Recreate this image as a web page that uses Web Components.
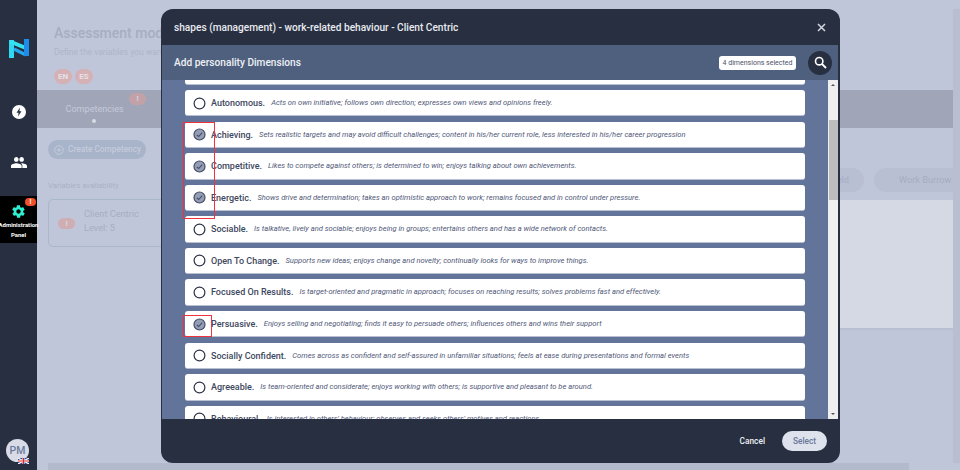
<!DOCTYPE html>
<html><head><meta charset="utf-8"><style>
html,body{margin:0;padding:0;width:960px;height:470px;overflow:hidden;background:#c0c6da;font-family:Roboto,sans-serif}
</style></head><body>
<app-shell></app-shell>
<script>
const def=(n,html)=>customElements.define(n,class extends HTMLElement{connectedCallback(){if(this.shadowRoot)return;const r=this.attachShadow({mode:'open'});r.innerHTML=typeof html==='function'?html(this):html;}});
def('side-bar',`<style>
:host{display:flex;flex-direction:column;width:37px;height:470px;background:#272f40;flex:none;position:relative;align-items:center}
.logo{margin-top:38px;display:block}
.a{margin-top:46px;display:block}
.b{margin-top:38px;display:block}
.admin{margin-top:28px;width:37px;height:47px;background:#000;color:#fff;font:700 6px/9.6px Roboto,sans-serif;text-align:center;position:relative;display:flex;flex-direction:column;align-items:center}
.admin svg{margin-top:8px;margin-bottom:1px}
.admin span{white-space:nowrap}
.bad{position:absolute;right:1px;top:2px;width:11px;height:8px;border-radius:5px;background:#f0502a;font:700 7px/8px Roboto,sans-serif;color:#fff}
.pm{position:absolute;left:6px;top:439px;width:23px;height:23px;border-radius:50%;background:#d9dce6;color:#6b7ba0;font:500 10.500px/23px Roboto,sans-serif;text-align:center}
.flag{position:absolute;left:18px;top:458px}
</style>
<svg class="logo" width="20" height="21" viewBox="0 0 20 21"><path d="M2.500 20V2" stroke="#2fd8f4" stroke-width="5" fill="none"/><path d="M1 3.500L18 10.500" stroke="#35e2f2" stroke-width="4" fill="none"/><path d="M5 11L17 17" stroke="#25a8ec" stroke-width="3.500" fill="none"/><path d="M17.500 1V18" stroke="#1e8ce8" stroke-width="5" fill="none"/></svg>
<svg class="a" width="14" height="14" viewBox="0 0 14 14"><circle cx="7" cy="7" r="7" fill="#fff"/><path d="M8 2.500 L4.500 7.800 H6.600 L6 11.500 L9.500 6.200 H7.400 Z" fill="#272f40"/></svg>
<svg class="b" width="16" height="11" viewBox="0 0 24 16" preserveAspectRatio="none"><path fill="#fff" d="M16 7c1.900 0 3.400-1.500 3.400-3.500S17.900 0 16 0s-3.500 1.600-3.500 3.500S14.100 7 16 7zM8 7c1.900 0 3.400-1.500 3.400-3.500S9.900 0 8 0 4.500 1.600 4.500 3.500 6.100 7 8 7zm0 2c-2.700 0-8 1.300-8 4v3h16v-3c0-2.700-5.300-4-8-4zm8 0c-.3 0-.7 0-1.100.1 1.300.9 2.100 2.200 2.100 3.900v3h7v-3c0-2.700-5.300-4-8-4z"/></svg>
<div class="admin"><svg width="15" height="15" viewBox="0 0 24 24"><path fill="#2ff0d0" d="M19.400 13c0-.3.100-.6.100-1s0-.7-.1-1l2.100-1.600c.2-.2.200-.4.100-.6l-2-3.500c-.1-.2-.4-.3-.6-.2l-2.500 1c-.5-.4-1.100-.7-1.700-1l-.4-2.600c0-.3-.2-.5-.5-.5h-4c-.3 0-.5.200-.5.400l-.4 2.700c-.6.200-1.100.6-1.700 1l-2.500-1c-.2-.1-.5 0-.6.200l-2 3.500c-.1.200-.1.500.1.600L4.600 11c0 .3-.1.600-.1 1s0 .7.100 1l-2.100 1.600c-.2.200-.2.400-.1.600l2 3.500c.1.200.4.300.6.200l2.500-1c.5.400 1.100.7 1.700 1l.4 2.600c0 .2.200.4.500.4h4c.3 0 .5-.2.500-.4l.4-2.600c.6-.3 1.200-.6 1.700-1l2.500 1c.2.100.5 0 .6-.2l2-3.500c.1-.2.100-.5-.1-.6zM12 15.500c-1.900 0-3.500-1.600-3.500-3.500s1.600-3.500 3.500-3.500 3.500 1.600 3.500 3.500-1.600 3.500-3.500 3.500z"/></svg><span>Administration</span><span>Panel</span><div class="bad">!</div></div>
<div class="pm">PM</div>
<svg class="flag" width="11" height="6" viewBox="0 0 11 6"><rect width="11" height="6" fill="#2b3f8a"/><path d="M0 0L11 6M11 0L0 6" stroke="#fff" stroke-width="1.200"/><path d="M5.500 0V6M0 3H11" stroke="#fff" stroke-width="2"/><path d="M5.500 0V6M0 3H11" stroke="#d22" stroke-width="1"/></svg>
`);
def('back-page',`<style>
:host{display:block;flex:1;height:470px;position:relative;color:#a9b0c6;overflow:hidden}
.h{padding:25px 0 0 17px;font:500 14px/17px Roboto,sans-serif;color:#a6adc2;white-space:nowrap}
.s{padding:5px 0 0 17px;font:400 8.500px/10px Roboto,sans-serif;color:#adb4ca;white-space:nowrap}
.l{display:flex;gap:3px;padding:12px 0 0 17px}
.l i{width:18px;height:15px;border-radius:8px;background:#d5b0b4;color:#e4e1e6;font:700 8px/15px Roboto,sans-serif;text-align:center}
.tabs{margin-top:6px;height:38px;width:916px;background:#a0a5b8;position:relative;color:#c5cad8;font:400 9.100px/38px Roboto,sans-serif}
.tabs span{position:absolute;left:28.500px;top:0}
.tabs b{position:absolute;left:92px;top:3px;width:17px;height:12px;border-radius:6px;background:#c2a2a8;color:#d8d4dc;font:700 8px/12px Roboto,sans-serif;text-align:center}
.tabs u{position:absolute;left:55px;top:29px;width:4px;height:4px;border-radius:50%;background:#d9dce6}
.bt{margin:12px 0 0 11px;width:98px;height:19px;border-radius:10px;background:#a8b4ca;color:#c4cbdb;font:500 8.300px/19px Roboto,sans-serif;display:flex;align-items:center;gap:4px;box-sizing:border-box;padding-left:6px;white-space:nowrap}
.v{padding:22px 0 0 11px;font:400 7.800px/9px Roboto,sans-serif;color:#aab1c6;white-space:nowrap}
.card{margin:9px 0 0 11px;width:300px;height:48px;box-sizing:border-box;border:1px solid #a9b7ca;border-radius:5px;position:relative;font:400 9.200px/14px Roboto,sans-serif;color:#a6adc2}
.card b{position:absolute;left:9px;top:18px;width:17px;height:11px;border-radius:6px;background:#cfaeb3;color:#dcd8de;font:700 8px/11px Roboto,sans-serif;text-align:center}
.card span{position:absolute;left:35px;white-space:nowrap}
.pill{position:absolute;top:168px;height:24px;border-radius:12px;background:#b9bfd2;font:400 9.200px/24px Roboto,sans-serif;color:#a5acc1;white-space:nowrap;box-sizing:border-box}
.panel{position:absolute;left:700px;top:200px;width:216px;height:128px;background:#d5d9e4;box-shadow:0 2px 2px #b8bed0}
.sv{position:absolute;right:0;top:9px;width:7px;height:454px;background:#b9bfd1}
.sh{position:absolute;left:11px;bottom:0;width:861px;height:7px;background:#b3bacb}
</style>
<div class="h">Assessment model</div><div class="s">Define the variables you want to measure</div>
<div class="l"><i>EN</i><i>ES</i></div>
<div class="tabs"><span>Competencies</span><b>!</b><u></u></div>
<div class="bt"><svg width="10" height="10" viewBox="0 0 10 10"><circle cx="5" cy="5" r="4.300" fill="none" stroke="#c4cbdb"/><path d="M5 2.800V7.200M2.800 5H7.200" stroke="#c4cbdb"/></svg>Create Competency</div>
<div class="v">Variables availability</div>
<div class="card"><b>!</b><span style="top:7px">Client Centric</span><span style="top:21px">Level: 5</span></div>
<div class="pill" style="left:760px;width:67px;padding-right:15px;text-align:right">Field</div>
<div class="pill" style="left:837px;width:102px;padding-left:25px">Work Burrow</div>
<div class="panel"></div>
<div class="sv"></div><div class="sh"></div>
`);
def('dim-row',h=>{
 const on=h.hasAttribute('on');
 const mark=on?`<svg width="13" height="13" viewBox="0 0 13 13"><circle cx="6.500" cy="6.500" r="5.500" fill="#949db6" stroke="#454d64" stroke-width="1.200"/><path d="M3.800 6.800L5.700 8.500L9.200 4.700" fill="none" stroke="#454d64" stroke-width="1.100"/></svg>`:`<svg width="13" height="13" viewBox="0 0 13 13"><circle cx="6.500" cy="6.500" r="5.400" fill="#fff" stroke="#2a3246" stroke-width="1.200"/></svg>`;
 return `<style>
:host{display:flex;align-items:center;height:26.400px;width:620px;flex:none;box-sizing:border-box;background:#fff;border-radius:3px;border-bottom:1px solid #b9c0d2;padding:.7px 0 0 8px;white-space:nowrap;overflow:hidden}
svg{flex:none;margin-right:5px}
b{font:500 9px/12px Roboto,sans-serif;color:#3e4760;margin-right:6px}
i{font:italic 400 7.580px/12px Roboto,sans-serif;color:#4f5878}
</style>${mark}<b><slot name="t"></slot></b><i><slot></slot></i>`;
});
def('select-modal',`<style>
:host{display:flex;flex-direction:column;position:absolute;left:161px;top:9px;width:679px;height:454px;border-radius:12px;overflow:hidden;background:#272f40;box-sizing:border-box}
.top{height:36px;flex:none;display:flex;align-items:center;justify-content:space-between;padding:2px 14px 0 13px;box-sizing:border-box;color:#e9ebf1;font:500 10.150px/14px Roboto,sans-serif}
.top svg{margin-top:-2px}
.sub{height:35px;flex:none;display:flex;align-items:center;background:#4f607e;padding:0 6px 0 12px;color:#eef0f5;font:500 10.150px/14px Roboto,sans-serif;margin:0 2px 0 1px}
.sub span{flex:1}
.chip{height:14px;width:77px;background:#fff;border-radius:3px;color:#4b5269;font:400 7px/14px Roboto,sans-serif;text-align:center;margin-right:12px}
.sr{width:24px;height:24px;border-radius:50%;background:#272f40;display:flex;align-items:center;justify-content:center}
.body{flex:1;display:flex;min-height:0;background:#62749a;margin:0 2px 0 1px;overflow:hidden}
.list{flex:1;display:flex;flex-direction:column;gap:5.200px;padding:0 0 0 23px;margin-top:-21.600px}
.bar{width:10px;flex:none;background:#efefef;position:relative}
.th{position:absolute;left:1px;right:0;top:40px;height:80px;background:#bdbdbd}
.bar:before,.bar:after{content:"";position:absolute;left:3px;border:2.500px solid transparent}
.bar:before{top:4px;border-bottom-color:#555;border-top:0}
.bar:after{bottom:4px;border-top-color:#555;border-bottom:0}
.foot{height:44px;flex:none;display:flex;align-items:center;justify-content:flex-end;padding:0 13px 0 0;gap:17px}
.c{font:500 8.300px/12px Roboto,sans-serif;color:#f0f1f5}
.sel{width:45px;height:20px;border-radius:10px;background:#dde2ec;color:#69779a;font:500 8.300px/20px Roboto,sans-serif;text-align:center}
</style>
<div class="top"><span>shapes (management) - work-related behaviour - Client Centric</span><svg width="9" height="9" viewBox="0 0 9 9"><path d="M1 1L8 8M8 1L1 8" stroke="#d4d8e2" stroke-width="1.500"/></svg></div>
<div class="sub"><span>Add personality Dimensions</span><div class="chip">4 dimensions selected</div><div class="sr"><svg width="13" height="13" viewBox="0 0 13 13"><circle cx="5.200" cy="5.200" r="3.700" fill="none" stroke="#fff" stroke-width="1.600"/><path d="M8 8L12 12" stroke="#fff" stroke-width="1.800"/></svg></div></div>
<div class="body"><div class="list"><slot></slot></div><div class="bar"><div class="th"></div></div></div>
<div class="foot"><span class="c">Cancel</span><div class="sel">Select</div></div>
`);
def('app-shell',`<style>
:host{display:flex;width:960px;height:470px;position:relative;overflow:hidden;background:#c0c6da}
.mk{position:absolute;border:1.200px solid #f0323c;box-sizing:border-box;pointer-events:none}
</style>
<side-bar></side-bar><back-page></back-page>
<select-modal>
<dim-row></dim-row>
<dim-row><span slot="t">Autonomous.</span>Acts on own initiative; follows own direction; expresses own views and opinions freely.</dim-row>
<dim-row on><span slot="t">Achieving.</span>Sets realistic targets and may avoid difficult challenges; content in his/her current role, less interested in his/her career progression</dim-row>
<dim-row on><span slot="t">Competitive.</span>Likes to compete against others; is determined to win; enjoys talking about own achievements.</dim-row>
<dim-row on><span slot="t">Energetic.</span>Shows drive and determination; takes an optimistic approach to work; remains focused and in control under pressure.</dim-row>
<dim-row><span slot="t">Sociable.</span>Is talkative, lively and sociable; enjoys being in groups; entertains others and has a wide network of contacts.</dim-row>
<dim-row><span slot="t">Open To Change.</span>Supports new ideas; enjoys change and novelty; continually looks for ways to improve things.</dim-row>
<dim-row><span slot="t">Focused On Results.</span>Is target-oriented and pragmatic in approach; focuses on reaching results; solves problems fast and effectively.</dim-row>
<dim-row on><span slot="t">Persuasive.</span>Enjoys selling and negotiating; finds it easy to persuade others; influences others and wins their support</dim-row>
<dim-row><span slot="t">Socially Confident.</span>Comes across as confident and self-assured in unfamiliar situations; feels at ease during presentations and formal events</dim-row>
<dim-row><span slot="t">Agreeable.</span>Is team-oriented and considerate; enjoys working with others; is supportive and pleasant to be around.</dim-row>
<dim-row><span slot="t">Behavioural.</span>Is interested in others' behaviour; observes and seeks others' motives and reactions.</dim-row>
</select-modal>
<div class="mk" style="left:183px;top:122px;width:32px;height:97px"></div>
<div class="mk" style="left:183px;top:315px;width:29px;height:22px"></div>
`);
</script>
</body></html>
